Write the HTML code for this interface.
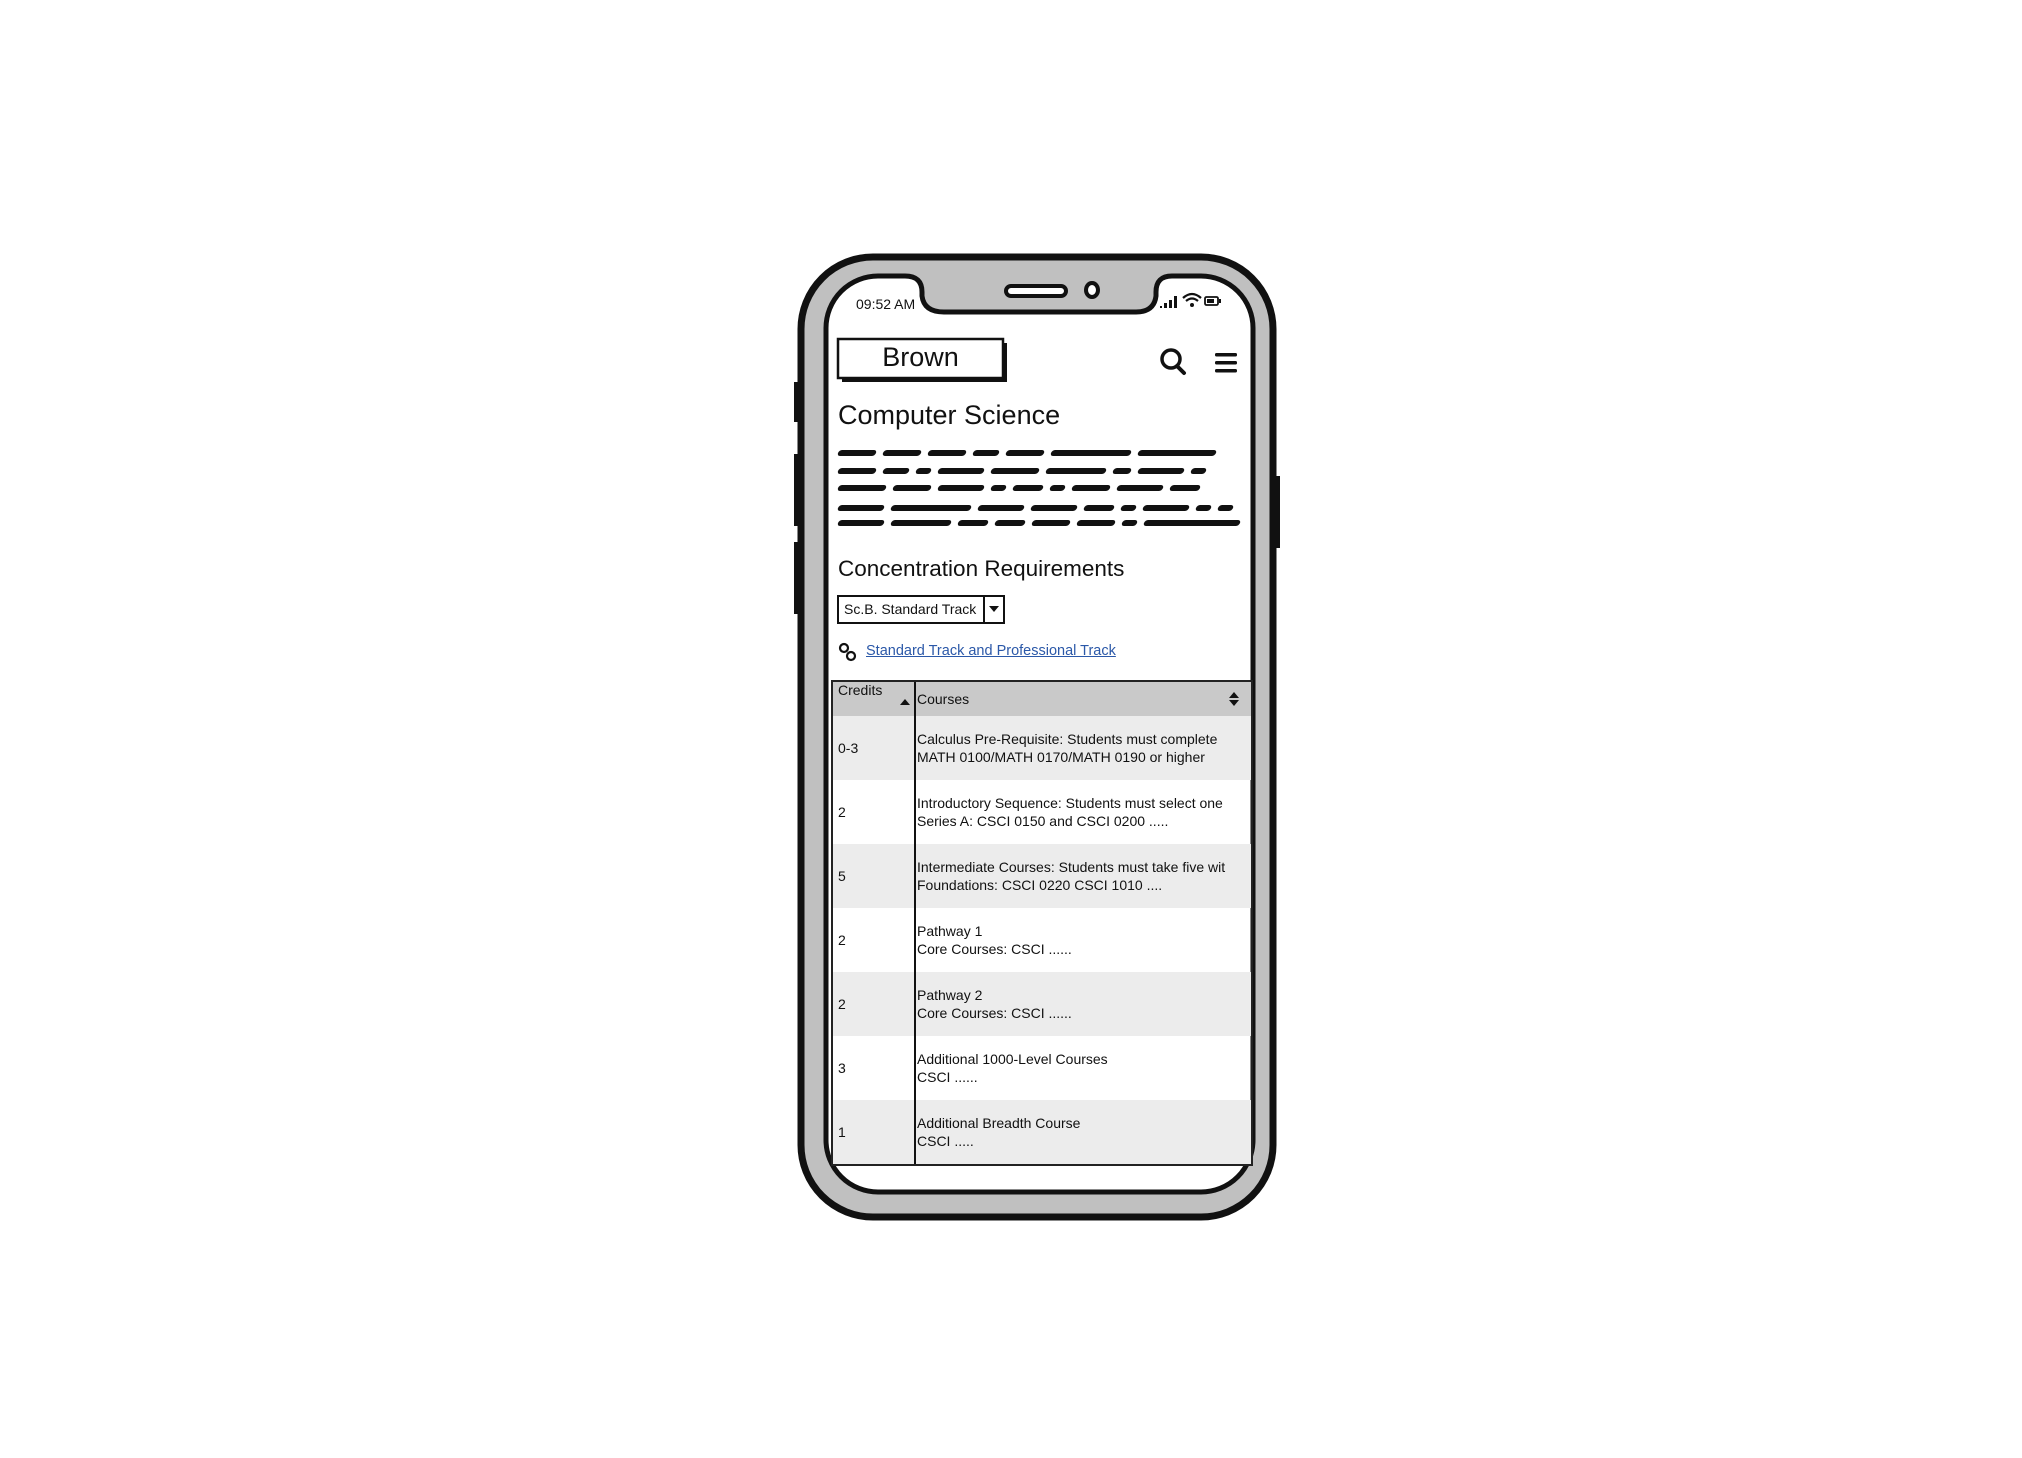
<!DOCTYPE html>
<html><head><meta charset="utf-8"><style>
*{margin:0;padding:0;box-sizing:border-box}
body{width:2022px;height:1458px;background:#fff;position:relative;overflow:hidden;font-family:"Liberation Sans","DejaVu Sans",sans-serif;color:#111}
.a{position:absolute}
.sc{position:absolute;left:838px;display:flex;gap:7px}
.sc span{display:block;height:6px;background:#111;border-radius:3px;transform:skewX(-20deg)}
.tbl{position:absolute;left:831px;top:680px;width:422px;border:2px solid #222;font-size:14px;line-height:18px}
.row{display:flex;height:64px;align-items:center}
.row .c1{width:81px;padding-left:5px}
.row .c2{flex:1;padding-left:3px;white-space:nowrap;overflow:hidden}
.row.g{background:#ececec}
</style></head><body>
<svg class="a" style="left:0;top:0" width="2022" height="1458">
 <rect x="794" y="382" width="8" height="40" fill="#111"/>
 <rect x="794" y="454" width="8" height="72" fill="#111"/>
 <rect x="794" y="542" width="8" height="72" fill="#111"/>
 <rect x="1272" y="476" width="8" height="72" fill="#111"/>
 <rect x="801" y="257" width="472" height="960" rx="72" fill="#c0c0c0" stroke="#111" stroke-width="7"/>
 <rect x="826" y="276" width="427" height="916" rx="52" fill="#fff" stroke="#111" stroke-width="5"/>
 <path d="M905 272 L1172 272 L1172 276 Q1156 276 1156 292 L1156 296 Q1154 312 1136 312 L944 312 Q924 312 922 296 L922 292 Q922 276 905 276 Z" fill="#c0c0c0"/>
 <path d="M905 276 Q922 276 922 292 L922 296 Q924 312 944 312 L1136 312 Q1154 312 1156 296 L1156 292 Q1156 276 1172 276" fill="none" stroke="#111" stroke-width="5"/>
 <rect x="1006" y="286" width="60" height="10" rx="5" fill="#fff" stroke="#111" stroke-width="4"/>
 <ellipse cx="1092" cy="290" rx="6" ry="7" fill="#fff" stroke="#111" stroke-width="4"/>
 <rect x="1160" y="306" width="2" height="2" fill="#111"/><rect x="1164" y="303" width="3" height="5" fill="#111"/><rect x="1169" y="300" width="3" height="8" fill="#111"/><rect x="1174" y="296" width="3" height="12" fill="#111"/>
 <path d="M1183 298 Q1192 290 1201 298 M1186 301 Q1192 296 1198 301" stroke="#111" stroke-width="2.2" fill="none"/><circle cx="1192" cy="305" r="2" fill="#111"/>
 <rect x="1205" y="297" width="13" height="8" rx="1.5" fill="none" stroke="#111" stroke-width="1.8"/><rect x="1207" y="299" width="7" height="4" fill="#111"/><rect x="1219" y="299" width="2" height="4" fill="#111"/>
 <rect x="842" y="343" width="165" height="39" fill="#111"/>
 <rect x="838" y="339" width="165" height="39" fill="#fff" stroke="#111" stroke-width="2.5"/>
 <circle cx="1171" cy="359" r="9" fill="none" stroke="#111" stroke-width="3.5"/>
 <line x1="1177" y1="366" x2="1184" y2="373" stroke="#111" stroke-width="4" stroke-linecap="round"/>
 <rect x="1215" y="353" width="22" height="3.5" rx="1.5" fill="#111"/><rect x="1215" y="361" width="22" height="3.5" rx="1.5" fill="#111"/><rect x="1215" y="369" width="22" height="3.5" rx="1.5" fill="#111"/>
 <rect x="838" y="596" width="166" height="27" fill="#fff" stroke="#111" stroke-width="2"/>
 <line x1="984" y1="596" x2="984" y2="623" stroke="#111" stroke-width="2"/>
 <path d="M989 606 L999 606 L994 612 Z" fill="#111"/>
 <circle cx="844" cy="648" r="4" fill="none" stroke="#111" stroke-width="2.2"/><circle cx="851" cy="656" r="4" fill="none" stroke="#111" stroke-width="2.2"/>
</svg>
<div class="a" style="left:856px;top:296px;font-size:14px">09:52 AM</div>
<div class="a" style="left:838px;top:342px;width:165px;text-align:center;font-size:27px;line-height:30px">Brown</div>
<div class="a" style="left:838px;top:400px;font-size:27px">Computer Science</div>
<div class="sc" style="top:450px"><span style="width:38px"></span><span style="width:38px"></span><span style="width:38px"></span><span style="width:26px"></span><span style="width:38px"></span><span style="width:80px"></span><span style="width:78px"></span></div>
<div class="sc" style="top:468px"><span style="width:38px"></span><span style="width:26px"></span><span style="width:15px"></span><span style="width:46px"></span><span style="width:48px"></span><span style="width:60px"></span><span style="width:18px"></span><span style="width:46px"></span><span style="width:15px"></span></div>
<div class="sc" style="top:485px"><span style="width:48px"></span><span style="width:38px"></span><span style="width:46px"></span><span style="width:15px"></span><span style="width:30px"></span><span style="width:15px"></span><span style="width:38px"></span><span style="width:46px"></span><span style="width:30px"></span></div>
<div class="sc" style="top:505px"><span style="width:46px"></span><span style="width:80px"></span><span style="width:46px"></span><span style="width:46px"></span><span style="width:30px"></span><span style="width:15px"></span><span style="width:46px"></span><span style="width:15px"></span><span style="width:15px"></span></div>
<div class="sc" style="top:520px"><span style="width:46px"></span><span style="width:60px"></span><span style="width:30px"></span><span style="width:30px"></span><span style="width:38px"></span><span style="width:38px"></span><span style="width:15px"></span><span style="width:96px"></span></div>
<div class="a" style="left:838px;top:556px;font-size:22.5px">Concentration Requirements</div>
<div class="a" style="left:844px;top:601px;font-size:14px">Sc.B. Standard Track</div>
<div class="a" style="left:866px;top:643px;font-size:14.5px;color:#2b58a8;text-decoration:underline">Standard Track and Professional Track</div>
<div class="tbl">
 <div style="display:flex;height:34px;background:#c9c9c9">
  <div style="width:81px;padding-left:5px;position:relative;line-height:16px">Credits<svg style="position:absolute;right:4px;top:17px" width="10" height="7"><path d="M0 6 L5 0 L10 6Z" fill="#111"/></svg></div>
  <div style="flex:1;padding-left:3px;line-height:34px;position:relative">Courses<svg style="position:absolute;right:12px;top:9px" width="10" height="16"><path d="M0 7 L5 1 L10 7Z M0 9 L5 15 L10 9Z" fill="#111"/></svg></div>
 </div>
 <div class="row g"><div class="c1">0-3</div><div class="c2">Calculus Pre-Requisite: Students must complete<br>MATH 0100/MATH 0170/MATH 0190 or higher</div></div>
 <div class="row"><div class="c1">2</div><div class="c2">Introductory Sequence: Students must select one<br>Series A: CSCI 0150 and CSCI 0200 .....</div></div>
 <div class="row g"><div class="c1">5</div><div class="c2">Intermediate Courses: Students must take five wit<br>Foundations: CSCI 0220 CSCI 1010 ....</div></div>
 <div class="row"><div class="c1">2</div><div class="c2">Pathway 1<br>Core Courses: CSCI ......</div></div>
 <div class="row g"><div class="c1">2</div><div class="c2">Pathway 2<br>Core Courses: CSCI ......</div></div>
 <div class="row"><div class="c1">3</div><div class="c2">Additional 1000-Level Courses<br>CSCI ......</div></div>
 <div class="row g"><div class="c1">1</div><div class="c2">Additional Breadth Course<br>CSCI .....</div></div>
 <div class="a" style="left:81px;top:0;width:2px;height:100%;background:#111"></div>
</div>
</body></html>
